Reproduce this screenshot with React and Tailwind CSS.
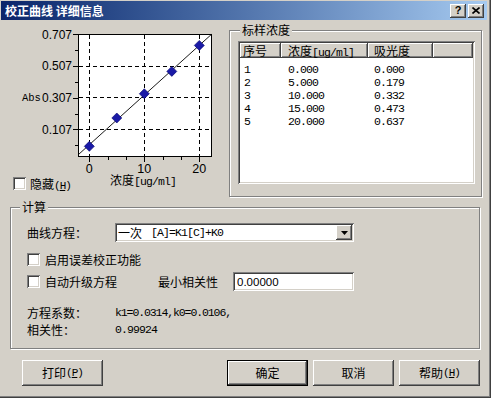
import React from "react";

const CJK = "font-[family-name:'Noto_Sans_CJK_SC',sans-serif]";
const MONO = "font-[family-name:'Liberation_Mono',monospace]";
const SANS = "font-[family-name:'Liberation_Sans',Arial,sans-serif]";
const SUNKEN =
  "shadow-[inset_1px_1px_0_#808080,inset_-1px_-1px_0_#ffffff,inset_2px_2px_0_#404040,inset_-2px_-2px_0_#d4d0c8]";
const RAISED =
  "shadow-[inset_-1px_-1px_0_#404040,inset_1px_1px_0_#ffffff,inset_-2px_-2px_0_#808080,inset_2px_2px_0_#d4d0c8]";
const ETCHED =
  "border border-[#808080] shadow-[inset_1px_1px_0_#ffffff,1px_1px_0_#ffffff]";

function M({ children, className = "" }) {
  return (
    <span className={`${MONO} text-[11.5px] tracking-[-0.9px] ${className}`}>{children}</span>
  );
}

function Mn({ ch }) {
  return (
    <span className={`${MONO} text-[11px] tracking-[-1px]`}>
      (<span className="underline">{ch}</span>)
    </span>
  );
}

function Check({ className = "" }) {
  return <div className={`w-[13px] h-[13px] bg-white shrink-0 ${SUNKEN} ${className}`} />;
}

const xs = (u) => 89.3 + u * 5.5;
const ys = (v) => 34.3 + (0.707 - v) * 158.5;

function Chart() {
  const pts = [
    [0, 0],
    [5, 0.179],
    [10, 0.332],
    [15, 0.473],
    [20, 0.637],
  ];
  const majorY = [0.707, 0.507, 0.307, 0.107];
  const minorY = [0.607, 0.407, 0.207, 0.007];
  const minorX = [1, 2, 4, 5].map((k) => 89.3 + k * 18.33);
  return (
    <svg width="225" height="154" viewBox="0 20 225 154" className="block shrink-0">
      <rect x="78.5" y="34.5" width="133" height="122" fill="#ffffff" stroke="#000" />
      {[89.5, 144.5, 199.5].map((x) => (
        <line key={x} x1={x} y1="35" x2={x} y2="156" stroke="#000" strokeDasharray="4 3" />
      ))}
      {[66.5, 97.5, 129.5].map((y) => (
        <line key={y} x1="79" y1={y} x2="211" y2={y} stroke="#000" strokeDasharray="4 3" />
      ))}
      {majorY.map((v) => (
        <line key={v} x1="73" y1={Math.round(ys(v)) + 0.5} x2="78" y2={Math.round(ys(v)) + 0.5} stroke="#000" />
      ))}
      {minorY.map((v) => (
        <line key={v} x1="75" y1={Math.round(ys(v)) + 0.5} x2="78" y2={Math.round(ys(v)) + 0.5} stroke="#000" />
      ))}
      {[0, 10, 20].map((u) => (
        <line key={u} x1={Math.round(xs(u)) + 0.5} y1="157" x2={Math.round(xs(u)) + 0.5} y2="162" stroke="#000" />
      ))}
      {minorX.map((x) => (
        <line key={x} x1={Math.round(x) + 0.5} y1="157" x2={Math.round(x) + 0.5} y2="160" stroke="#000" />
      ))}
      <line x1="78.5" y1="154.5" x2="211.3" y2="34.5" stroke="#000" strokeWidth="0.9" />
      {pts.map(([u, v]) => {
        const x = xs(u);
        const y = ys(v);
        return (
          <polygon
            key={u}
            points={`${x},${y - 5} ${x + 5},${y} ${x},${y + 5} ${x - 5},${y}`}
            fill="#1a1aa6"
            stroke="#00006a"
            strokeWidth="0.6"
          />
        );
      })}
      {majorY.map((v) => (
        <text
          key={v}
          x="72"
          y={ys(v) + 4.4}
          textAnchor="end"
          fontFamily="'Liberation Sans', Arial, sans-serif"
          fontSize="12"
          fill="#000"
        >
          {v.toFixed(3)}
        </text>
      ))}
      {[0, 10, 20].map((u) => (
        <text
          key={u}
          x={xs(u)}
          y="172.5"
          textAnchor="middle"
          fontFamily="'Liberation Sans', Arial, sans-serif"
          fontSize="12.5"
          fill="#000"
        >
          {u}
        </text>
      ))}
      <text x="22" y="100.5" fontFamily="'Liberation Mono', monospace" fontSize="10.5" fill="#000">
        Abs
      </text>
    </svg>
  );
}

const rows = [
  ["1", "0.000", "0.000"],
  ["2", "5.000", "0.179"],
  ["3", "10.000", "0.332"],
  ["4", "15.000", "0.473"],
  ["5", "20.000", "0.637"],
];

const HEAD =
  "h-[15px] bg-[#d4d0c8] shadow-[inset_-1px_-1px_0_#404040,inset_1px_1px_0_#ffffff,inset_-2px_-2px_0_#808080] leading-[15px] shrink-0";

function Button({ children, def = false, className = "" }) {
  if (def) {
    return (
      <div className={`w-[81px] h-[26px] border border-black shrink-0 ${className}`}>
        <div className={`w-full h-full flex items-center justify-center bg-[#d4d0c8] ${RAISED}`}>{children}</div>
      </div>
    );
  }
  return (
    <div className={`w-[81px] h-[26px] flex items-center justify-center bg-[#d4d0c8] shrink-0 ${RAISED} ${className}`}>
      {children}
    </div>
  );
}

export default function App() {
  return (
    <div
      className={`w-[491px] h-[398px] bg-[#d4d0c8] flex flex-col text-[12px] leading-[14px] text-black overflow-hidden ${CJK} shadow-[inset_-1px_-1px_0_#404040,inset_-2px_-2px_0_#808080]`}
    >
      {/* Title bar */}
      <div className="ml-[1px] mr-[4px] mt-[1px] h-[19px] shrink-0 flex items-center bg-linear-to-r from-[#0a246a] to-[#a6caf0] pl-[4px] pr-[3px]">
        <span className="text-white font-bold text-[12px] leading-[14px]">校正曲线 详细信息</span>
        <div className="ml-auto flex gap-[2px]">
          <div className={`w-[16px] h-[14px] bg-[#d4d0c8] flex items-center justify-center ${RAISED}`}>
            <span className={`${SANS} font-bold text-[11px] leading-[11px]`}>?</span>
          </div>
          <div className={`w-[16px] h-[14px] bg-[#d4d0c8] flex items-center justify-center ${RAISED}`}>
            <svg width="8" height="7" viewBox="0 0 8 7">
              <path d="M0.5 0.5 L7.5 6.5 M7.5 0.5 L0.5 6.5" stroke="#000" strokeWidth="1.6" />
            </svg>
          </div>
        </div>
      </div>

      {/* Top section */}
      <div className="flex h-[177px] shrink-0">
        <div className="w-[225px] flex flex-col shrink-0">
          <Chart />
          <div className="flex items-start h-[18px]">
            <Check className="ml-[13px] mt-[3px]" />
            <span className="ml-[4px] mt-[3px] w-[80px] leading-[14px]">
              隐藏<Mn ch="H" />
            </span>
            <span className="-mt-[1px] leading-[14px]">
              浓度<M>[ug/ml]</M>
            </span>
          </div>
        </div>

        <div className={`relative ml-[4px] mt-[10px] w-[253px] h-[167px] ${ETCHED}`}>
          <span className="absolute left-[10px] -top-[8px] px-[2px] bg-[#d4d0c8] leading-[14px]">标样浓度</span>
          <div className={`ml-[8px] mt-[10px] w-[237px] h-[143px] bg-white p-[2px] flex flex-col ${SUNKEN}`}>
            <div className="flex">
              <div className={`w-[41px] pl-[3px] ${HEAD}`}>序号</div>
              <div className={`w-[87px] pl-[7px] ${HEAD}`}>
                浓度<M>[ug/ml]</M>
              </div>
              <div className={`w-[65px] pl-[6px] ${HEAD}`}>吸光度</div>
              <div className={`flex-1 ${HEAD}`} />
            </div>
            <div className="pt-[3px] flex flex-col">
              {rows.map((r) => (
                <div key={r[0]} className="flex h-[13px] leading-[13px]">
                  <div className="w-[41px] pl-[4px]">
                    <M>{r[0]}</M>
                  </div>
                  <div className="w-[87px] pl-[7px]">
                    <M>{r[1]}</M>
                  </div>
                  <div className="w-[65px] pl-[6px]">
                    <M>{r[2]}</M>
                  </div>
                </div>
              ))}
            </div>
          </div>
        </div>
      </div>

      {/* 计算 group */}
      <div className={`relative ml-[10px] mt-[10px] w-[470px] h-[142px] shrink-0 flex flex-col ${ETCHED}`}>
        <span className="absolute left-[9px] -top-[8px] px-[2px] bg-[#d4d0c8] leading-[14px]">计算</span>

        <div className="ml-[16px] mt-[15px] h-[19px] flex items-center">
          <span className="w-[88px]">曲线方程：</span>
          <div className={`w-[239px] h-[19px] bg-white flex items-center p-[2px] ${SUNKEN}`}>
            <span className="pl-[1px] leading-[14px]">一次</span>
            <M className="ml-[9px]">[A]=K1[C]+K0</M>
            <div className={`ml-auto w-[16px] h-[15px] bg-[#d4d0c8] flex items-center justify-center ${RAISED}`}>
              <svg width="7" height="4" viewBox="0 0 7 4">
                <polygon points="0,0 7,0 3.5,4" fill="#000" />
              </svg>
            </div>
          </div>
        </div>

        <div className="ml-[16px] mt-[11px] h-[13px] flex items-center">
          <Check />
          <span className="ml-[5px]">启用误差校正功能</span>
        </div>

        <div className="ml-[16px] mt-[6px] h-[19px] flex items-center">
          <Check />
          <span className="ml-[5px] w-[113px]">自动升级方程</span>
          <span className="w-[75px]">最小相关性</span>
          <div className={`w-[121px] h-[19px] bg-white flex items-center pl-[4px] ${SUNKEN}`}>
            <span className={`${SANS} text-[11.5px]`}>0.00000</span>
          </div>
        </div>

        <div className="ml-[16px] mt-[14px] h-[16px] flex items-center">
          <span className="w-[88px]">方程系数：</span>
          <M className="tracking-[-1.1px]">k1=0.0314,k0=0.0106,</M>
        </div>
        <div className="ml-[16px] mt-[1px] h-[16px] flex items-center">
          <span className="w-[88px]">相关性：</span>
          <M>0.99924</M>
        </div>
      </div>

      {/* Buttons */}
      <div className="mt-[11px] h-[26px] flex shrink-0">
        <Button className="ml-[22px]">
          打印<Mn ch="P" />
        </Button>
        <Button def className="ml-[124px]">
          确定
        </Button>
        <Button className="ml-[5px]">取消</Button>
        <Button className="ml-[5px]">
          帮助<Mn ch="H" />
        </Button>
      </div>
    </div>
  );
}
